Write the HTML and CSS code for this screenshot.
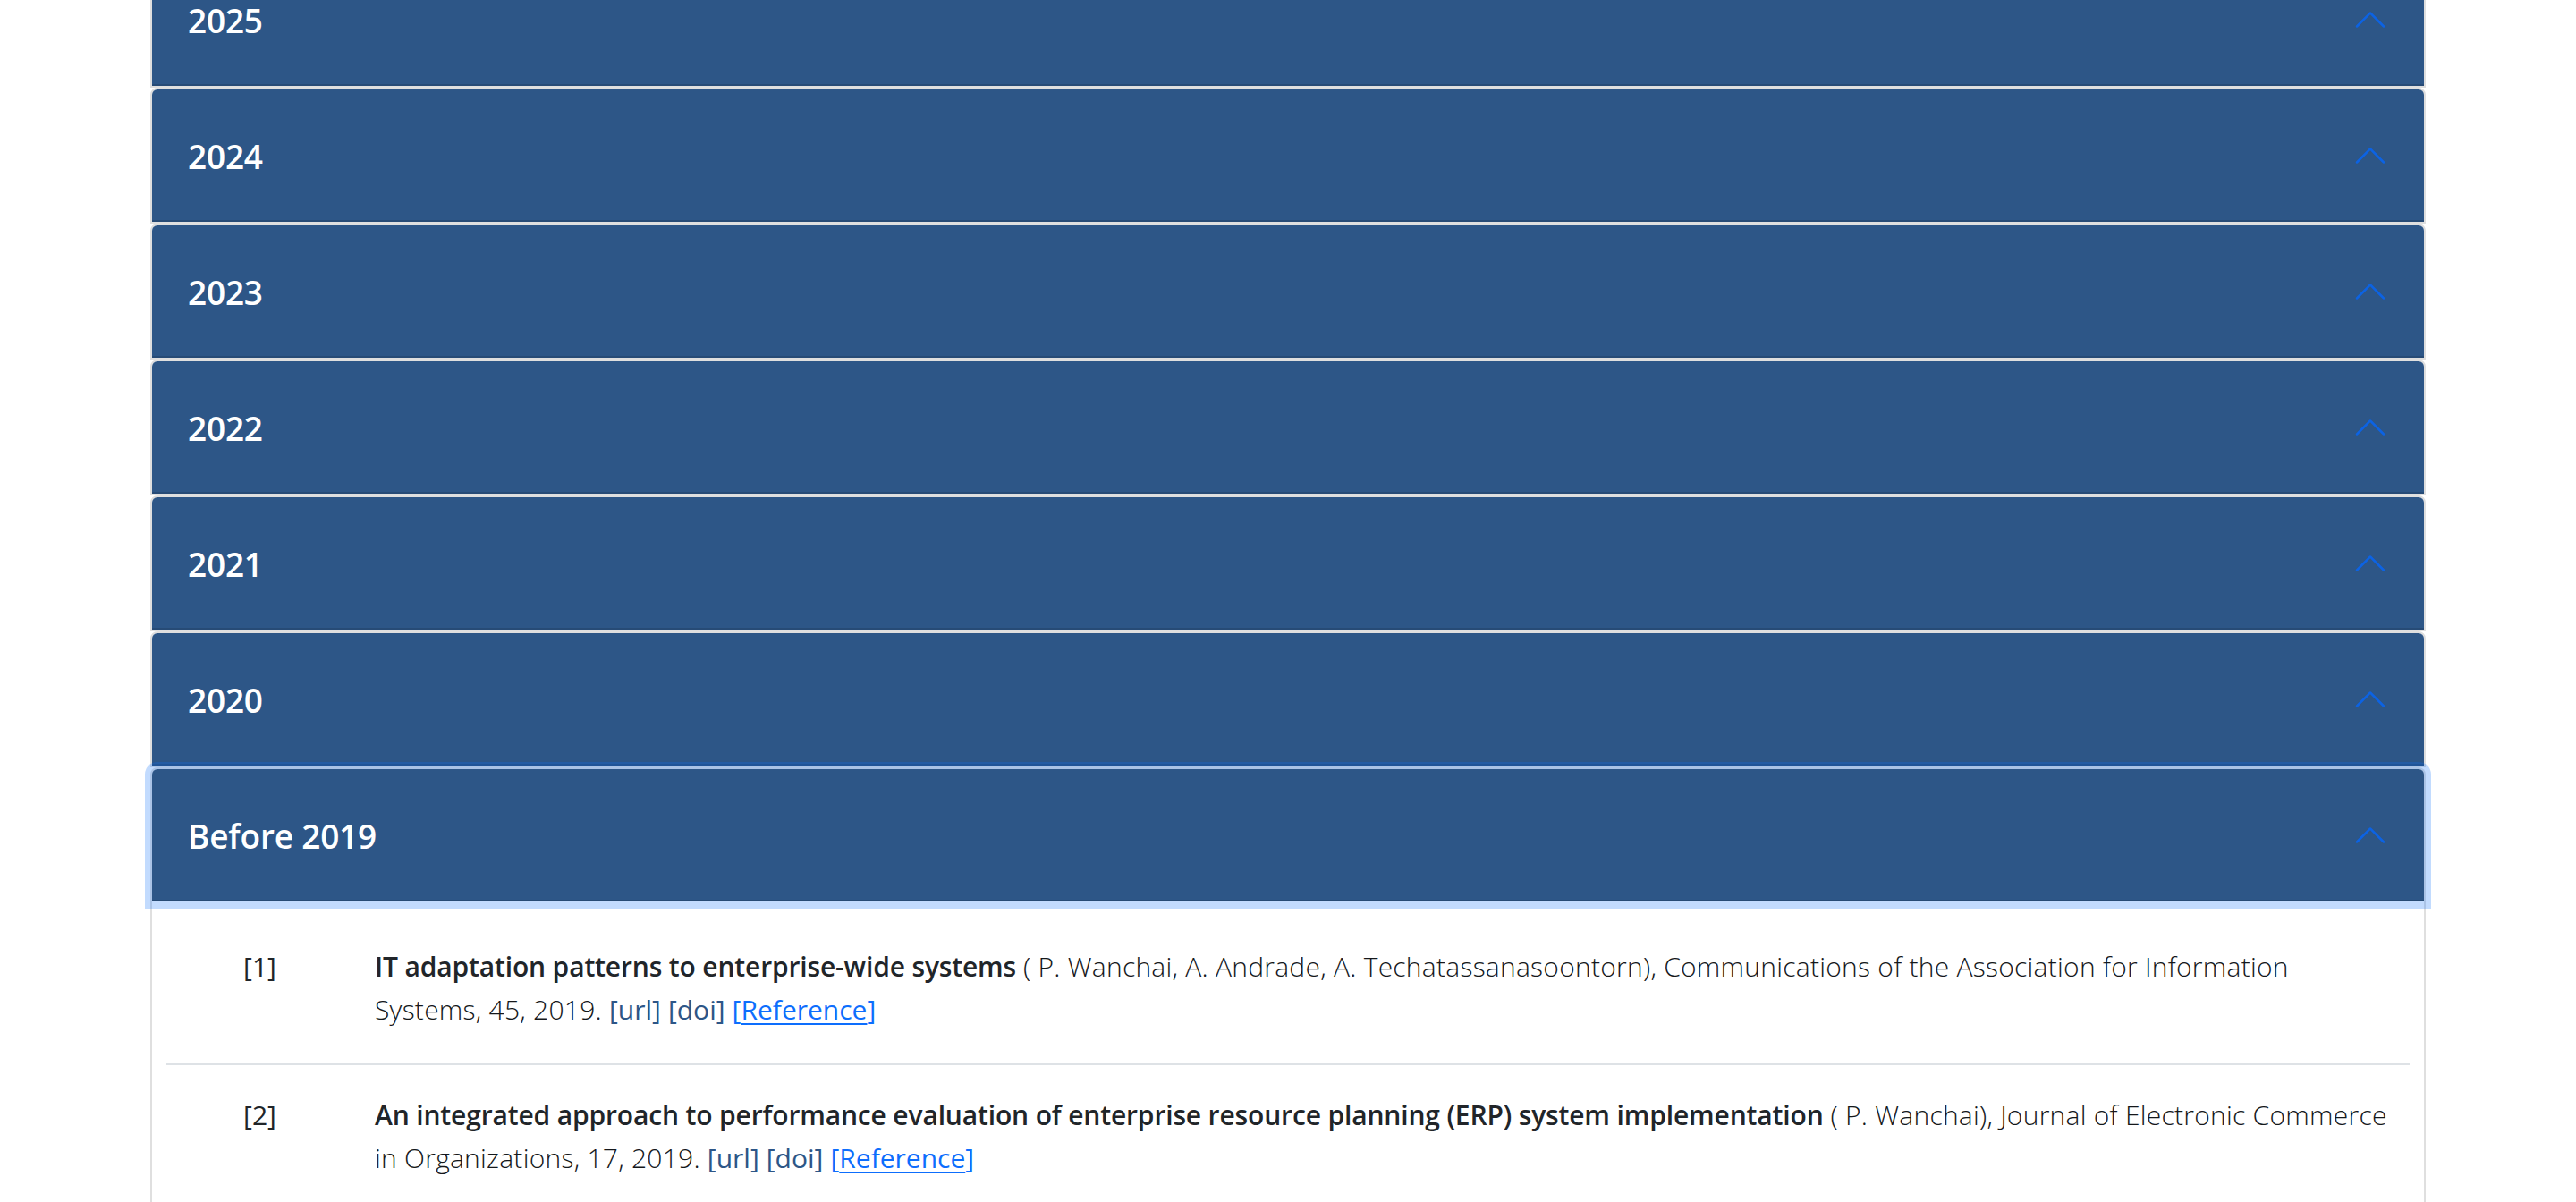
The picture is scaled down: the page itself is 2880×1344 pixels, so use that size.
FILE: index.html
```html
<!DOCTYPE html>
<html lang="en">
<head>
<meta charset="utf-8">
<title>Publications</title>
<link rel="stylesheet" href="styles.css">
</head>
<body>
<div class="page">
  <div class="accordion">
    <div class="acc-item">
      <button class="acc-btn"><span class="acc-title">2025</span><svg class="chev" viewBox="0 0 16 16"><path d="M1.646 4.646a.5.5 0 0 1 .708 0L8 10.293l5.646-5.647a.5.5 0 0 1 .708.708l-6 6a.5.5 0 0 1-.708 0l-6-6a.5.5 0 0 1 0-.708z"/></svg></button>
    </div>
    <div class="acc-item">
      <button class="acc-btn"><span class="acc-title">2024</span><svg class="chev" viewBox="0 0 16 16"><path d="M1.646 4.646a.5.5 0 0 1 .708 0L8 10.293l5.646-5.647a.5.5 0 0 1 .708.708l-6 6a.5.5 0 0 1-.708 0l-6-6a.5.5 0 0 1 0-.708z"/></svg></button>
    </div>
    <div class="acc-item">
      <button class="acc-btn"><span class="acc-title">2023</span><svg class="chev" viewBox="0 0 16 16"><path d="M1.646 4.646a.5.5 0 0 1 .708 0L8 10.293l5.646-5.647a.5.5 0 0 1 .708.708l-6 6a.5.5 0 0 1-.708 0l-6-6a.5.5 0 0 1 0-.708z"/></svg></button>
    </div>
    <div class="acc-item">
      <button class="acc-btn"><span class="acc-title">2022</span><svg class="chev" viewBox="0 0 16 16"><path d="M1.646 4.646a.5.5 0 0 1 .708 0L8 10.293l5.646-5.647a.5.5 0 0 1 .708.708l-6 6a.5.5 0 0 1-.708 0l-6-6a.5.5 0 0 1 0-.708z"/></svg></button>
    </div>
    <div class="acc-item">
      <button class="acc-btn"><span class="acc-title">2021</span><svg class="chev" viewBox="0 0 16 16"><path d="M1.646 4.646a.5.5 0 0 1 .708 0L8 10.293l5.646-5.647a.5.5 0 0 1 .708.708l-6 6a.5.5 0 0 1-.708 0l-6-6a.5.5 0 0 1 0-.708z"/></svg></button>
    </div>
    <div class="acc-item">
      <button class="acc-btn"><span class="acc-title">2020</span><svg class="chev" viewBox="0 0 16 16"><path d="M1.646 4.646a.5.5 0 0 1 .708 0L8 10.293l5.646-5.647a.5.5 0 0 1 .708.708l-6 6a.5.5 0 0 1-.708 0l-6-6a.5.5 0 0 1 0-.708z"/></svg></button>
    </div>
    <div class="acc-item open">
      <button class="acc-btn focused"><span class="acc-title">Before 2019</span><svg class="chev" viewBox="0 0 16 16"><path d="M1.646 4.646a.5.5 0 0 1 .708 0L8 10.293l5.646-5.647a.5.5 0 0 1 .708.708l-6 6a.5.5 0 0 1-.708 0l-6-6a.5.5 0 0 1 0-.708z"/></svg></button>
      <div class="acc-body">
        <div class="pub">
          <div class="pub-num">[1]</div>
          <div class="pub-text"><b>IT adaptation patterns to enterprise-wide systems</b> ( P. Wanchai, A. Andrade, A. Techatassanasoontorn), Communications of the Association for Information Systems, 45, 2019. <a class="lnk">[url]</a> <a class="lnk">[doi]</a> <span class="ref">[<u>Reference</u>]</span></div>
        </div>
        <div class="pub">
          <div class="pub-num">[2]</div>
          <div class="pub-text"><b>An integrated approach to performance evaluation of enterprise resource planning (ERP) system implementation</b> ( P. Wanchai), Journal of Electronic Commerce in Organizations, 17, 2019. <a class="lnk">[url]</a> <a class="lnk">[doi]</a> <span class="ref">[<u>Reference</u>]</span></div>
        </div>
      </div>
    </div>
  </div>
</div>
</body>
</html>
```
FILE: styles.css
```css
html, body {
  margin: 0;
  padding: 0;
  background: #ffffff;
}
body {
  font-family: "Open Sans", "Noto Sans", sans-serif;
  color: #212529;
  overflow: hidden;
}
.page {
  width: 2544px;
  margin: -54px auto 0;
}
.accordion {
  display: flex;
  flex-direction: column;
}
.acc-item {
  border: 2px solid #dfdfdf;
  border-radius: 8px 8px 0 0;
  background: #ffffff;
}
.acc-item.open {
  border-bottom: 0;
}
.acc-btn {
  display: flex;
  align-items: center;
  justify-content: space-between;
  width: 100%;
  height: 148px;
  padding: 0 40px;
  border: 0;
  border-radius: 6px 6px 0 0;
  background: #2d5687;
  box-shadow: inset 0 -2px 0 rgba(0, 0, 0, 0.125);
  color: #ffffff;
  font-family: "Open Sans", "Noto Sans", sans-serif;
  font-size: 37px;
  font-weight: 600;
  text-align: left;
  cursor: pointer;
  position: relative;
}
.acc-btn.focused {
  z-index: 3;
  box-shadow: inset 0 -2px 0 rgba(0, 0, 0, 0.125), 0 0 0 8px rgba(13, 110, 253, 0.25);
}
.acc-title {
  letter-spacing: -0.2px;
}
.chev {
  width: 40px;
  height: 40px;
  fill: #0c63e4;
  transform: rotate(-180deg);
  flex: none;
}
.acc-body {
  padding: 17px 40px 0;
}
.pub {
  display: grid;
  grid-template-columns: 1fr 11fr;
  margin: 0 -24px;
  padding: 32px 0 36px;
  border-bottom: 2px solid #dee2e6;
  font-size: 30px;
  line-height: 48px;
  font-weight: 300;
  color: #15181b;
}
.pub-num {
  padding: 0 24px;
  text-align: center;
  font-weight: 400;
  color: #212529;
}
.pub-text {
  padding: 0 24px;
  letter-spacing: 0.25px;
}
.pub-text b {
  font-weight: 600;
  letter-spacing: -0.15px;
  color: #212529;
}
.lnk {
  color: #2d5687;
  font-weight: 400;
  letter-spacing: 0;
  text-decoration: none;
}
.ref {
  color: #0d6efd;
  font-weight: 400;
  letter-spacing: 0;
}
.ref u {
  text-decoration-thickness: 2px;
  text-underline-offset: 4px;
}
```
